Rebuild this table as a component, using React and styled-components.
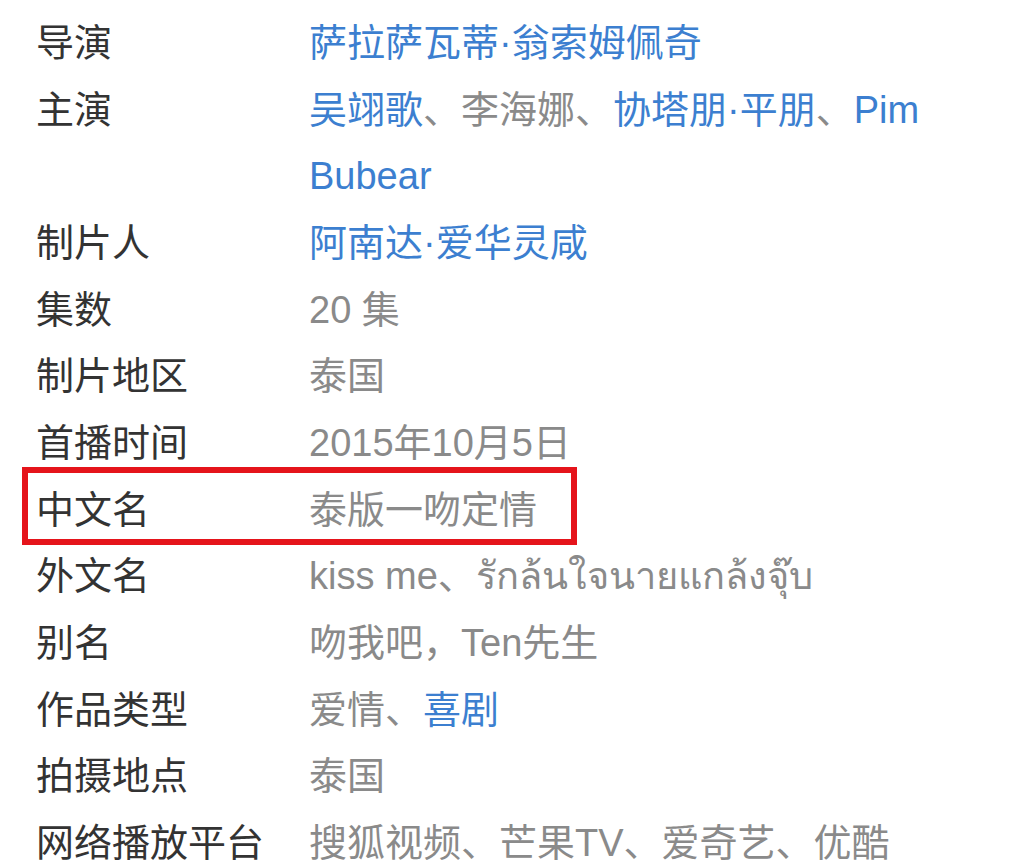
import React from "react";
import styled, { createGlobalStyle, css } from "styled-components";

const Global = createGlobalStyle`
  html, body { margin: 0; padding: 0; background: #fff; }
  body {
    font-family: "Liberation Sans", "Noto Sans CJK SC", "Noto Sans", sans-serif;
  }
`;

const List = styled.dl`
  margin: 0;
  padding: 10px 40px 0 36px;
  width: 1024px;
  box-sizing: border-box;
  font-size: 38px;
  line-height: 66.67px;
`;

const Row = styled.div`
  display: grid;
  grid-template-columns: 273px 1fr;
  position: relative;
  ${(p) =>
    p.$highlight &&
    css`
      &::after {
        content: "";
        position: absolute;
        left: -14px;
        top: -10px;
        width: 555px;
        height: 78px;
        box-sizing: border-box;
        border: 6px solid #e5141b;
        pointer-events: none;
      }
    `}
`;

const Label = styled.dt`
  margin: 0;
  color: #333;
  white-space: nowrap;
`;

const Value = styled.dd`
  margin: 0;
  color: #8a8a8a;
`;

const Link = styled.span`
  color: #3c7fd0;
`;

const rows = [
  { label: "导演", value: [<Link key="a">萨拉萨瓦蒂·翁索姆佩奇</Link>] },
  {
    label: "主演",
    value: [
      <Link key="a">吴翊歌</Link>,
      "、李海娜、",
      <Link key="b">协塔朋·平朋</Link>,
      "、",
      <Link key="c">Pim Bubear</Link>,
    ],
  },
  { label: "制片人", value: [<Link key="a">阿南达·爱华灵咸</Link>] },
  { label: "集数", value: ["20 集"] },
  { label: "制片地区", value: ["泰国"] },
  { label: "首播时间", value: ["2015年10月5日"] },
  { label: "中文名", value: ["泰版一吻定情"], highlight: true },
  { label: "外文名", value: ["kiss me、รักล้นใจนายแกล้งจุ๊บ"] },
  { label: "别名", value: ["吻我吧，Ten先生"] },
  { label: "作品类型", value: ["爱情、", <Link key="a">喜剧</Link>] },
  { label: "拍摄地点", value: ["泰国"] },
  { label: "网络播放平台", value: ["搜狐视频、芒果TV、爱奇艺、优酷"] },
];

export default function App() {
  return (
    <>
      <Global />
      <List>
        {rows.map((r) => (
          <Row key={r.label} $highlight={r.highlight}>
            <Label>{r.label}</Label>
            <Value>{r.value}</Value>
          </Row>
        ))}
      </List>
    </>
  );
}
